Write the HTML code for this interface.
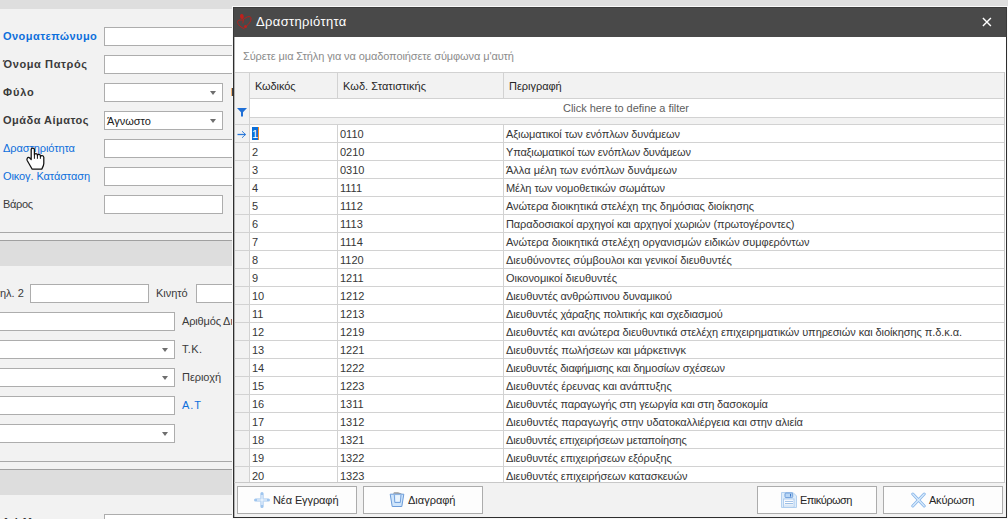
<!DOCTYPE html>
<html><head><meta charset="utf-8"><style>
html,body{margin:0;padding:0}
body{width:1008px;height:519px;overflow:hidden;position:relative;background:#f2f2f2;font-family:"Liberation Sans", sans-serif}
.a{position:absolute}
.t{position:absolute;white-space:pre;line-height:13px;font-family:"Liberation Sans", sans-serif}
</style></head><body>
<div class="a" style="left:0px;top:0px;width:1008px;height:9px;background:#dedede;"></div>
<div class="t" style="left:3px;top:30px;font-size:11px;color:#0d6fdc;font-weight:bold;letter-spacing:0.449px;">Ονοματεπώνυμο</div>
<div class="t" style="left:3px;top:58px;font-size:11px;color:#3a3a3a;font-weight:bold;letter-spacing:0.607px;">Όνομα Πατρός</div>
<div class="t" style="left:3px;top:86px;font-size:11px;color:#3a3a3a;font-weight:bold;letter-spacing:0.853px;">Φύλο</div>
<div class="t" style="left:3px;top:114px;font-size:11px;color:#3a3a3a;font-weight:bold;letter-spacing:0.486px;">Ομάδα Αίματος</div>
<div class="t" style="left:3px;top:142px;font-size:11px;color:#0d6fdc;letter-spacing:-0.076px;">Δραστηριότητα</div>
<div class="t" style="left:3px;top:170px;font-size:11px;color:#0d6fdc;letter-spacing:-0.097px;">Οικογ. Κατάσταση</div>
<div class="t" style="left:3px;top:198px;font-size:11px;color:#3a3a3a;letter-spacing:-0.344px;">Βάρος</div>
<div class="a" style="left:104px;top:27px;width:140px;height:19px;background:#ffffff;border:1px solid #adadad;box-sizing:border-box;"></div>
<div class="a" style="left:104px;top:55px;width:140px;height:19px;background:#ffffff;border:1px solid #adadad;box-sizing:border-box;"></div>
<div class="a" style="left:104px;top:83px;width:119px;height:19px;background:#ffffff;border:1px solid #adadad;box-sizing:border-box;"></div>
<div class="a" style="left:210px;top:91px;width:0;height:0;border-left:3.5px solid transparent;border-right:3.5px solid transparent;border-top:4px solid #6e6e6e"></div>
<div class="a" style="left:104px;top:111px;width:119px;height:19px;background:#ffffff;border:1px solid #adadad;box-sizing:border-box;"></div>
<div class="a" style="left:210px;top:119px;width:0;height:0;border-left:3.5px solid transparent;border-right:3.5px solid transparent;border-top:4px solid #6e6e6e"></div>
<div class="t" style="left:107px;top:115px;font-size:11px;color:#202020;">Άγνωστο</div>
<div class="a" style="left:104px;top:139px;width:140px;height:19px;background:#ffffff;border:1px solid #adadad;box-sizing:border-box;"></div>
<div class="a" style="left:104px;top:167px;width:140px;height:19px;background:#ffffff;border:1px solid #adadad;box-sizing:border-box;"></div>
<div class="a" style="left:104px;top:195px;width:119px;height:19px;background:#ffffff;border:1px solid #adadad;box-sizing:border-box;"></div>
<div class="a" style="left:0px;top:232px;width:1008px;height:1px;background:#a8a8a8;"></div>
<div class="a" style="left:0px;top:240px;width:1008px;height:1px;background:#a0a0a0;"></div>
<div class="a" style="left:0px;top:241px;width:1008px;height:25px;background:#dddddd;"></div>
<div class="t" style="left:0px;top:287px;font-size:11px;color:#3a3a3a;">ηλ. 2</div>
<div class="a" style="left:30px;top:284px;width:119px;height:19px;background:#ffffff;border:1px solid #adadad;box-sizing:border-box;"></div>
<div class="t" style="left:156px;top:287px;font-size:11px;color:#3a3a3a;letter-spacing:-0.035px;">Κινητό</div>
<div class="a" style="left:196px;top:284px;width:60px;height:19px;background:#ffffff;border:1px solid #adadad;box-sizing:border-box;"></div>
<div class="a" style="left:-5px;top:312px;width:180px;height:19px;background:#ffffff;border:1px solid #adadad;box-sizing:border-box;"></div>
<div class="t" style="left:182px;top:315px;font-size:11px;color:#3a3a3a;letter-spacing:-0.154px;">Αριθμός</div>
<div class="t" style="left:223px;top:315px;font-size:11px;color:#3a3a3a;letter-spacing:0.086px;">Διαβατηρίου</div>
<div class="a" style="left:-5px;top:340px;width:180px;height:19px;background:#ffffff;border:1px solid #adadad;box-sizing:border-box;"></div>
<div class="a" style="left:162px;top:348px;width:0;height:0;border-left:3.5px solid transparent;border-right:3.5px solid transparent;border-top:4px solid #6e6e6e"></div>
<div class="t" style="left:182px;top:343px;font-size:11px;color:#3a3a3a;letter-spacing:0.344px;">Τ.Κ.</div>
<div class="a" style="left:-5px;top:368px;width:180px;height:19px;background:#ffffff;border:1px solid #adadad;box-sizing:border-box;"></div>
<div class="a" style="left:162px;top:376px;width:0;height:0;border-left:3.5px solid transparent;border-right:3.5px solid transparent;border-top:4px solid #6e6e6e"></div>
<div class="t" style="left:182px;top:371px;font-size:11px;color:#3a3a3a;letter-spacing:-0.044px;">Περιοχή</div>
<div class="a" style="left:-5px;top:396px;width:180px;height:19px;background:#ffffff;border:1px solid #adadad;box-sizing:border-box;"></div>
<div class="t" style="left:182px;top:399px;font-size:11px;color:#0d6fdc;letter-spacing:0.938px;">Α.Τ</div>
<div class="a" style="left:-5px;top:424px;width:180px;height:19px;background:#ffffff;border:1px solid #adadad;box-sizing:border-box;"></div>
<div class="a" style="left:162px;top:432px;width:0;height:0;border-left:3.5px solid transparent;border-right:3.5px solid transparent;border-top:4px solid #6e6e6e"></div>
<div class="a" style="left:0px;top:461px;width:1008px;height:1px;background:#a8a8a8;"></div>
<div class="a" style="left:0px;top:469px;width:1008px;height:1px;background:#a0a0a0;"></div>
<div class="a" style="left:0px;top:470px;width:1008px;height:25px;background:#dddddd;"></div>
<div class="a" style="left:104px;top:514px;width:140px;height:19px;background:#ffffff;border:1px solid #adadad;box-sizing:border-box;"></div>
<div class="a" style="left:0;top:518px;width:100px;height:1px;overflow:hidden">
<div class="t" style="left:2px;top:-2px;font-size:11px;color:#3a3a3a;font-weight:bold;letter-spacing:-0.6px;">Α.Φ.Μ</div>
</div>
<svg class="a" style="left:25px;top:146px" width="21" height="26" viewBox="0 0 21 26">
<path d="M6.2 3.5 C6.2 1.6 9.4 1.6 9.4 3.5 L9.4 8.8 C9.6 7.2 12.2 7.2 12.4 8.8 L12.4 9.5 C12.6 8 15.2 8 15.4 9.8 L15.4 10.6 C15.8 9.2 18.6 9.4 18.8 11.2 L18.8 17.5 C18.8 19.5 17.5 21.5 16.7 23.2 L7.2 23.2 L2.2 14.5 C1.3 12.8 2.8 10.5 4.5 11.8 L6.2 13.5 Z" fill="#fff" stroke="#111" stroke-width="1.25" stroke-linejoin="round"/>
<path d="M9.4 8.8 V12.8 M12.4 9.5 V12.8 M15.4 10.6 V12.8" stroke="#111" stroke-width="1"/>
</svg>
<div class="a" style="left:232px;top:6px;width:776px;height:513px;background:#f8f8f8;"></div>
<div class="a" style="left:231px;top:88px;width:1px;height:8px;background:#f2b474;"></div>
<div class="a" style="left:232px;top:88px;width:1px;height:8px;background:#3c4048;"></div>
<div class="a" style="left:233px;top:7px;width:774px;height:511px;background:#f2f2f2;border:1px solid #2e2e2e;box-sizing:border-box;"></div>
<div class="a" style="left:233px;top:7px;width:774px;height:30px;background:#494949;"></div>
<div class="a" style="left:233px;top:7px;width:774px;height:1px;background:#3a3a3a;"></div>
<div class="a" style="left:233px;top:7px;width:1px;height:30px;background:#3a3a3a;"></div>
<div class="a" style="left:1006px;top:7px;width:1px;height:30px;background:#3a3a3a;"></div>
<div class="t" style="left:256px;top:15px;font-size:13px;color:#ffffff;letter-spacing:0.345px;">Δραστηριότητα</div>
<svg class="a" style="left:982px;top:17px" width="10" height="10" viewBox="0 0 10 10"><path d="M0.9 0.9 L8.9 8.9 M8.9 0.9 L0.9 8.9" stroke="#fff" stroke-width="1.4"/></svg>
<svg class="a" style="left:236px;top:13px" width="17" height="18" viewBox="0 0 17 18">
<ellipse cx="5.9" cy="3.5" rx="1.9" ry="2.5" fill="#c0201c" transform="rotate(-10 5.9 3.5)"/>
<path d="M8.5 15.8 C5 14.5 2 12 1.6 9.5 C1.3 7.6 2.5 7 4 7 L7 7 C9 5 11 3.6 13 3.6 C14.5 3.6 15.2 4.5 15 6 C14.8 8.5 13 11 10.5 13" fill="none" stroke="#b8201c" stroke-width="1"/>
<path d="M7.6 6 L6.8 10.5" fill="none" stroke="#b8201c" stroke-width="0.9"/>
<circle cx="9.5" cy="13.6" r="1.5" fill="#c0201c"/>
</svg>
<div class="a" style="left:234px;top:37px;width:772px;height:445px;background:#ffffff;"></div>
<div class="t" style="left:243px;top:50px;font-size:11px;color:#8c8c8c;letter-spacing:-0.103px;">Σύρετε μια Στήλη για να ομαδοποιήσετε σύμφωνα μ'αυτή</div>
<div class="a" style="left:234px;top:72px;width:771px;height:1px;background:#d2d2d2;"></div>
<div class="a" style="left:234px;top:73px;width:771px;height:25px;background:#f2f2f2;"></div>
<div class="a" style="left:234px;top:98px;width:771px;height:1px;background:#d2d2d2;"></div>
<div class="a" style="left:234px;top:73px;width:15px;height:410px;background:#f2f2f2;"></div>
<div class="a" style="left:249px;top:72px;width:1px;height:411px;background:#d2d2d2;"></div>
<div class="a" style="left:337px;top:73px;width:1px;height:25px;background:#d2d2d2;"></div>
<div class="a" style="left:503px;top:73px;width:1px;height:25px;background:#d2d2d2;"></div>
<div class="t" style="left:255px;top:80px;font-size:11px;color:#262626;letter-spacing:-0.109px;">Κωδικός</div>
<div class="t" style="left:343px;top:80px;font-size:11px;color:#262626;letter-spacing:0.057px;">Κωδ. Στατιστικής</div>
<div class="t" style="left:509px;top:80px;font-size:11px;color:#262626;letter-spacing:-0.028px;">Περιγραφή</div>
<div class="a" style="left:249px;top:117px;width:756px;height:1px;background:#d2d2d2;"></div>
<div class="a" style="left:234px;top:118px;width:771px;height:6px;background:#f2f2f2;"></div>
<div class="a" style="left:234px;top:124px;width:771px;height:1px;background:#d2d2d2;"></div>
<div class="a" style="left:249px;top:117px;width:1px;height:8px;background:#d2d2d2;"></div>
<div class="t" style="left:563px;top:102px;font-size:11px;color:#5e5e5e;letter-spacing:-0.042px;">Click here to define a filter</div>
<svg class="a" style="left:237px;top:108px" width="10" height="9" viewBox="0 0 10 9"><path d="M0 0 H10 L6 4.2 V8.5 H4 V4.2 Z" fill="#1f6fd6"/></svg>
<div class="a" style="left:234px;top:125px;width:771px;height:357px;overflow:hidden">
<div class="a" style="left:15px;top:17px;width:756px;height:1px;background:#d2d2d2"></div>
<div class="a" style="left:0;top:17px;width:15px;height:1px;background:#d2d2d2"></div>
<div class="a" style="left:103px;top:0px;width:1px;height:17px;background:#d2d2d2"></div>
<div class="a" style="left:269px;top:0px;width:1px;height:17px;background:#d2d2d2"></div>
<div class="a" style="left:18px;top:2px;width:6px;height:13px;background:#0c6fd8"></div>
<div class="a" style="left:24px;top:2px;width:1px;height:13px;background:#f08a24"></div>
<div class="t" style="left:18px;top:3px;font-size:11px;color:#ffffff;">1</div>
<div class="t" style="left:106px;top:3px;font-size:11px;color:#363636;">0110</div>
<div class="t" style="left:272px;top:3px;font-size:11px;color:#363636;letter-spacing:-0.092px;">Αξιωματικοί των ενόπλων δυνάμεων</div>
<div class="a" style="left:15px;top:35px;width:756px;height:1px;background:#d2d2d2"></div>
<div class="a" style="left:0;top:35px;width:15px;height:1px;background:#d2d2d2"></div>
<div class="a" style="left:103px;top:18px;width:1px;height:17px;background:#d2d2d2"></div>
<div class="a" style="left:269px;top:18px;width:1px;height:17px;background:#d2d2d2"></div>
<div class="t" style="left:18px;top:21px;font-size:11px;color:#363636;">2</div>
<div class="t" style="left:106px;top:21px;font-size:11px;color:#363636;">0210</div>
<div class="t" style="left:272px;top:21px;font-size:11px;color:#363636;letter-spacing:-0.171px;">Υπαξιωματικοί των ενόπλων δυνάμεων</div>
<div class="a" style="left:15px;top:53px;width:756px;height:1px;background:#d2d2d2"></div>
<div class="a" style="left:0;top:53px;width:15px;height:1px;background:#d2d2d2"></div>
<div class="a" style="left:103px;top:36px;width:1px;height:17px;background:#d2d2d2"></div>
<div class="a" style="left:269px;top:36px;width:1px;height:17px;background:#d2d2d2"></div>
<div class="t" style="left:18px;top:39px;font-size:11px;color:#363636;">3</div>
<div class="t" style="left:106px;top:39px;font-size:11px;color:#363636;">0310</div>
<div class="t" style="left:272px;top:39px;font-size:11px;color:#363636;letter-spacing:0.013px;">Άλλα μέλη των ενόπλων δυνάμεων</div>
<div class="a" style="left:15px;top:71px;width:756px;height:1px;background:#d2d2d2"></div>
<div class="a" style="left:0;top:71px;width:15px;height:1px;background:#d2d2d2"></div>
<div class="a" style="left:103px;top:54px;width:1px;height:17px;background:#d2d2d2"></div>
<div class="a" style="left:269px;top:54px;width:1px;height:17px;background:#d2d2d2"></div>
<div class="t" style="left:18px;top:57px;font-size:11px;color:#363636;">4</div>
<div class="t" style="left:106px;top:57px;font-size:11px;color:#363636;">1111</div>
<div class="t" style="left:272px;top:57px;font-size:11px;color:#363636;letter-spacing:-0.068px;">Μέλη των νομοθετικών σωμάτων</div>
<div class="a" style="left:15px;top:89px;width:756px;height:1px;background:#d2d2d2"></div>
<div class="a" style="left:0;top:89px;width:15px;height:1px;background:#d2d2d2"></div>
<div class="a" style="left:103px;top:72px;width:1px;height:17px;background:#d2d2d2"></div>
<div class="a" style="left:269px;top:72px;width:1px;height:17px;background:#d2d2d2"></div>
<div class="t" style="left:18px;top:75px;font-size:11px;color:#363636;">5</div>
<div class="t" style="left:106px;top:75px;font-size:11px;color:#363636;">1112</div>
<div class="t" style="left:272px;top:75px;font-size:11px;color:#363636;letter-spacing:-0.086px;">Ανώτερα διοικητικά στελέχη της δημόσιας διοίκησης</div>
<div class="a" style="left:15px;top:107px;width:756px;height:1px;background:#d2d2d2"></div>
<div class="a" style="left:0;top:107px;width:15px;height:1px;background:#d2d2d2"></div>
<div class="a" style="left:103px;top:90px;width:1px;height:17px;background:#d2d2d2"></div>
<div class="a" style="left:269px;top:90px;width:1px;height:17px;background:#d2d2d2"></div>
<div class="t" style="left:18px;top:93px;font-size:11px;color:#363636;">6</div>
<div class="t" style="left:106px;top:93px;font-size:11px;color:#363636;">1113</div>
<div class="t" style="left:272px;top:93px;font-size:11px;color:#363636;letter-spacing:-0.118px;">Παραδοσιακοί αρχηγοί και αρχηγοί χωριών (πρωτογέροντες)</div>
<div class="a" style="left:15px;top:125px;width:756px;height:1px;background:#d2d2d2"></div>
<div class="a" style="left:0;top:125px;width:15px;height:1px;background:#d2d2d2"></div>
<div class="a" style="left:103px;top:108px;width:1px;height:17px;background:#d2d2d2"></div>
<div class="a" style="left:269px;top:108px;width:1px;height:17px;background:#d2d2d2"></div>
<div class="t" style="left:18px;top:111px;font-size:11px;color:#363636;">7</div>
<div class="t" style="left:106px;top:111px;font-size:11px;color:#363636;">1114</div>
<div class="t" style="left:272px;top:111px;font-size:11px;color:#363636;letter-spacing:-0.043px;">Ανώτερα διοικητικά στελέχη οργανισμών ειδικών συμφερόντων</div>
<div class="a" style="left:15px;top:143px;width:756px;height:1px;background:#d2d2d2"></div>
<div class="a" style="left:0;top:143px;width:15px;height:1px;background:#d2d2d2"></div>
<div class="a" style="left:103px;top:126px;width:1px;height:17px;background:#d2d2d2"></div>
<div class="a" style="left:269px;top:126px;width:1px;height:17px;background:#d2d2d2"></div>
<div class="t" style="left:18px;top:129px;font-size:11px;color:#363636;">8</div>
<div class="t" style="left:106px;top:129px;font-size:11px;color:#363636;">1120</div>
<div class="t" style="left:272px;top:129px;font-size:11px;color:#363636;letter-spacing:-0.015px;">Διευθύνοντες σύμβουλοι και γενικοί διευθυντές</div>
<div class="a" style="left:15px;top:161px;width:756px;height:1px;background:#d2d2d2"></div>
<div class="a" style="left:0;top:161px;width:15px;height:1px;background:#d2d2d2"></div>
<div class="a" style="left:103px;top:144px;width:1px;height:17px;background:#d2d2d2"></div>
<div class="a" style="left:269px;top:144px;width:1px;height:17px;background:#d2d2d2"></div>
<div class="t" style="left:18px;top:147px;font-size:11px;color:#363636;">9</div>
<div class="t" style="left:106px;top:147px;font-size:11px;color:#363636;">1211</div>
<div class="t" style="left:272px;top:147px;font-size:11px;color:#363636;letter-spacing:-0.026px;">Οικονομικοί διευθυντές</div>
<div class="a" style="left:15px;top:179px;width:756px;height:1px;background:#d2d2d2"></div>
<div class="a" style="left:0;top:179px;width:15px;height:1px;background:#d2d2d2"></div>
<div class="a" style="left:103px;top:162px;width:1px;height:17px;background:#d2d2d2"></div>
<div class="a" style="left:269px;top:162px;width:1px;height:17px;background:#d2d2d2"></div>
<div class="t" style="left:18px;top:165px;font-size:11px;color:#363636;">10</div>
<div class="t" style="left:106px;top:165px;font-size:11px;color:#363636;">1212</div>
<div class="t" style="left:272px;top:165px;font-size:11px;color:#363636;letter-spacing:-0.121px;">Διευθυντές ανθρώπινου δυναμικού</div>
<div class="a" style="left:15px;top:197px;width:756px;height:1px;background:#d2d2d2"></div>
<div class="a" style="left:0;top:197px;width:15px;height:1px;background:#d2d2d2"></div>
<div class="a" style="left:103px;top:180px;width:1px;height:17px;background:#d2d2d2"></div>
<div class="a" style="left:269px;top:180px;width:1px;height:17px;background:#d2d2d2"></div>
<div class="t" style="left:18px;top:183px;font-size:11px;color:#363636;">11</div>
<div class="t" style="left:106px;top:183px;font-size:11px;color:#363636;">1213</div>
<div class="t" style="left:272px;top:183px;font-size:11px;color:#363636;letter-spacing:-0.141px;">Διευθυντές χάραξης πολιτικής και σχεδιασμού</div>
<div class="a" style="left:15px;top:215px;width:756px;height:1px;background:#d2d2d2"></div>
<div class="a" style="left:0;top:215px;width:15px;height:1px;background:#d2d2d2"></div>
<div class="a" style="left:103px;top:198px;width:1px;height:17px;background:#d2d2d2"></div>
<div class="a" style="left:269px;top:198px;width:1px;height:17px;background:#d2d2d2"></div>
<div class="t" style="left:18px;top:201px;font-size:11px;color:#363636;">12</div>
<div class="t" style="left:106px;top:201px;font-size:11px;color:#363636;">1219</div>
<div class="t" style="left:272px;top:201px;font-size:11px;color:#363636;letter-spacing:-0.08px;">Διευθυντές και ανώτερα διευθυντικά στελέχη επιχειρηματικών υπηρεσιών και διοίκησης π.δ.κ.α.</div>
<div class="a" style="left:15px;top:233px;width:756px;height:1px;background:#d2d2d2"></div>
<div class="a" style="left:0;top:233px;width:15px;height:1px;background:#d2d2d2"></div>
<div class="a" style="left:103px;top:216px;width:1px;height:17px;background:#d2d2d2"></div>
<div class="a" style="left:269px;top:216px;width:1px;height:17px;background:#d2d2d2"></div>
<div class="t" style="left:18px;top:219px;font-size:11px;color:#363636;">13</div>
<div class="t" style="left:106px;top:219px;font-size:11px;color:#363636;">1221</div>
<div class="t" style="left:272px;top:219px;font-size:11px;color:#363636;letter-spacing:-0.063px;">Διευθυντές πωλήσεων και μάρκετινγκ</div>
<div class="a" style="left:15px;top:251px;width:756px;height:1px;background:#d2d2d2"></div>
<div class="a" style="left:0;top:251px;width:15px;height:1px;background:#d2d2d2"></div>
<div class="a" style="left:103px;top:234px;width:1px;height:17px;background:#d2d2d2"></div>
<div class="a" style="left:269px;top:234px;width:1px;height:17px;background:#d2d2d2"></div>
<div class="t" style="left:18px;top:237px;font-size:11px;color:#363636;">14</div>
<div class="t" style="left:106px;top:237px;font-size:11px;color:#363636;">1222</div>
<div class="t" style="left:272px;top:237px;font-size:11px;color:#363636;letter-spacing:-0.164px;">Διευθυντές διαφήμισης και δημοσίων σχέσεων</div>
<div class="a" style="left:15px;top:269px;width:756px;height:1px;background:#d2d2d2"></div>
<div class="a" style="left:0;top:269px;width:15px;height:1px;background:#d2d2d2"></div>
<div class="a" style="left:103px;top:252px;width:1px;height:17px;background:#d2d2d2"></div>
<div class="a" style="left:269px;top:252px;width:1px;height:17px;background:#d2d2d2"></div>
<div class="t" style="left:18px;top:255px;font-size:11px;color:#363636;">15</div>
<div class="t" style="left:106px;top:255px;font-size:11px;color:#363636;">1223</div>
<div class="t" style="left:272px;top:255px;font-size:11px;color:#363636;letter-spacing:-0.074px;">Διευθυντές έρευνας και ανάπτυξης</div>
<div class="a" style="left:15px;top:287px;width:756px;height:1px;background:#d2d2d2"></div>
<div class="a" style="left:0;top:287px;width:15px;height:1px;background:#d2d2d2"></div>
<div class="a" style="left:103px;top:270px;width:1px;height:17px;background:#d2d2d2"></div>
<div class="a" style="left:269px;top:270px;width:1px;height:17px;background:#d2d2d2"></div>
<div class="t" style="left:18px;top:273px;font-size:11px;color:#363636;">16</div>
<div class="t" style="left:106px;top:273px;font-size:11px;color:#363636;">1311</div>
<div class="t" style="left:272px;top:273px;font-size:11px;color:#363636;letter-spacing:-0.141px;">Διευθυντές παραγωγής στη γεωργία και στη δασοκομία</div>
<div class="a" style="left:15px;top:305px;width:756px;height:1px;background:#d2d2d2"></div>
<div class="a" style="left:0;top:305px;width:15px;height:1px;background:#d2d2d2"></div>
<div class="a" style="left:103px;top:288px;width:1px;height:17px;background:#d2d2d2"></div>
<div class="a" style="left:269px;top:288px;width:1px;height:17px;background:#d2d2d2"></div>
<div class="t" style="left:18px;top:291px;font-size:11px;color:#363636;">17</div>
<div class="t" style="left:106px;top:291px;font-size:11px;color:#363636;">1312</div>
<div class="t" style="left:272px;top:291px;font-size:11px;color:#363636;letter-spacing:-0.065px;">Διευθυντές παραγωγής στην υδατοκαλλιέργεια και στην αλιεία</div>
<div class="a" style="left:15px;top:323px;width:756px;height:1px;background:#d2d2d2"></div>
<div class="a" style="left:0;top:323px;width:15px;height:1px;background:#d2d2d2"></div>
<div class="a" style="left:103px;top:306px;width:1px;height:17px;background:#d2d2d2"></div>
<div class="a" style="left:269px;top:306px;width:1px;height:17px;background:#d2d2d2"></div>
<div class="t" style="left:18px;top:309px;font-size:11px;color:#363636;">18</div>
<div class="t" style="left:106px;top:309px;font-size:11px;color:#363636;">1321</div>
<div class="t" style="left:272px;top:309px;font-size:11px;color:#363636;letter-spacing:-0.195px;">Διευθυντές επιχειρήσεων μεταποίησης</div>
<div class="a" style="left:15px;top:341px;width:756px;height:1px;background:#d2d2d2"></div>
<div class="a" style="left:0;top:341px;width:15px;height:1px;background:#d2d2d2"></div>
<div class="a" style="left:103px;top:324px;width:1px;height:17px;background:#d2d2d2"></div>
<div class="a" style="left:269px;top:324px;width:1px;height:17px;background:#d2d2d2"></div>
<div class="t" style="left:18px;top:327px;font-size:11px;color:#363636;">19</div>
<div class="t" style="left:106px;top:327px;font-size:11px;color:#363636;">1322</div>
<div class="t" style="left:272px;top:327px;font-size:11px;color:#363636;letter-spacing:-0.123px;">Διευθυντές επιχειρήσεων εξόρυξης</div>
<div class="a" style="left:15px;top:359px;width:756px;height:1px;background:#d2d2d2"></div>
<div class="a" style="left:0;top:359px;width:15px;height:1px;background:#d2d2d2"></div>
<div class="a" style="left:103px;top:342px;width:1px;height:17px;background:#d2d2d2"></div>
<div class="a" style="left:269px;top:342px;width:1px;height:17px;background:#d2d2d2"></div>
<div class="t" style="left:18px;top:345px;font-size:11px;color:#363636;">20</div>
<div class="t" style="left:106px;top:345px;font-size:11px;color:#363636;">1323</div>
<div class="t" style="left:272px;top:345px;font-size:11px;color:#363636;letter-spacing:-0.1px;">Διευθυντές επιχειρήσεων κατασκευών</div>
</div>
<svg class="a" style="left:237px;top:130px" width="10" height="9" viewBox="0 0 10 9"><path d="M0.5 4.5 H8.5" stroke="#2a78d8" stroke-width="1.3"/><path d="M5 1.2 L8.6 4.5 L5 7.8" fill="none" stroke="#2a78d8" stroke-width="0.9"/></svg>
<div class="a" style="left:234px;top:37px;width:1px;height:480px;background:#b4b4b4;"></div>
<div class="a" style="left:1004px;top:72px;width:1px;height:411px;background:#c8c8c8;"></div>
<div class="a" style="left:234px;top:482px;width:771px;height:1px;background:#c8c8c8;"></div>
<div class="a" style="left:237px;top:486px;width:120px;height:28px;background:#fdfdfd;border:1px solid #acacac;box-sizing:border-box;"></div>
<svg class="a" style="left:254px;top:492px" width="16" height="16" viewBox="0 0 16 16"><path d="M8 1.6 V14.4 M1.6 8 H14.4" stroke="#9fc5ee" stroke-width="3.2" stroke-linecap="round"/><path d="M8 3 V13 M3 8 H13" stroke="#cfe2f7" stroke-width="2.6"/><circle cx="8" cy="8" r="1.3" fill="#e6f1fc"/></svg>
<div class="t" style="left:273px;top:494px;font-size:11px;color:#262626;letter-spacing:-0.097px;">Νέα Εγγραφή</div>
<div class="a" style="left:363px;top:486px;width:120px;height:28px;background:#fdfdfd;border:1px solid #acacac;box-sizing:border-box;"></div>
<svg class="a" style="left:389px;top:491px" width="16" height="17" viewBox="0 0 16 17"><path d="M4 2.8 L5 1.2 H9 L12.5 2.5 L12.5 3 Z" fill="#9a9a9a"/><path d="M1.2 3.2 H14.8 L12.8 15.5 H3.2 Z" fill="#cfe5fb" stroke="#6b9bd9" stroke-width="1"/><path d="M6.5 4.2 L11.3 4.2 L10.8 10.3 L6.3 10.3 Z" fill="#eaf4fd"/><path d="M5.3 4 L5.8 11.5 H11.3 L12 4" fill="none" stroke="#6b9bd9" stroke-width="0.9"/></svg>
<div class="t" style="left:408px;top:494px;font-size:11px;color:#262626;letter-spacing:-0.004px;">Διαγραφή</div>
<div class="a" style="left:757px;top:486px;width:120px;height:28px;background:#fdfdfd;border:1px solid #acacac;box-sizing:border-box;"></div>
<svg class="a" style="left:781px;top:492px" width="16" height="16" viewBox="0 0 16 16"><path d="M0.5 0.5 H12 L15.5 4 V15.5 H0.5 Z" fill="#deedfb" stroke="#b3d0ef" stroke-width="1"/><rect x="4" y="1" width="7.7" height="4.6" rx="1" fill="#b9d6f5" stroke="#6f9fdb" stroke-width="1"/><rect x="9" y="2" width="1.1" height="2.6" fill="#3c78c8"/><rect x="2.6" y="7" width="10.4" height="8" fill="#ffffff" stroke="#a9c9ee" stroke-width="1"/><path d="M4 9.4 H12 M4 11.5 H12" stroke="#9dbfe6" stroke-width="1"/><rect x="3.2" y="12.4" width="9.3" height="2.4" fill="#dae8f6"/></svg>
<div class="t" style="left:800px;top:494px;font-size:11px;color:#262626;letter-spacing:-0.543px;">Επικύρωση</div>
<div class="a" style="left:883px;top:486px;width:120px;height:28px;background:#fdfdfd;border:1px solid #acacac;box-sizing:border-box;"></div>
<svg class="a" style="left:911px;top:492px" width="15" height="16" viewBox="0 0 15 16"><path d="M1.8 2 L13.2 14 M13.2 2 L1.8 14" stroke="#86b4e8" stroke-width="3" stroke-linecap="round"/><path d="M1.8 2 L13.2 14 M13.2 2 L1.8 14" stroke="#d9ebfc" stroke-width="1.3" stroke-linecap="round"/></svg>
<div class="t" style="left:929px;top:494px;font-size:11px;color:#262626;letter-spacing:-0.218px;">Ακύρωση</div>
</body></html>
